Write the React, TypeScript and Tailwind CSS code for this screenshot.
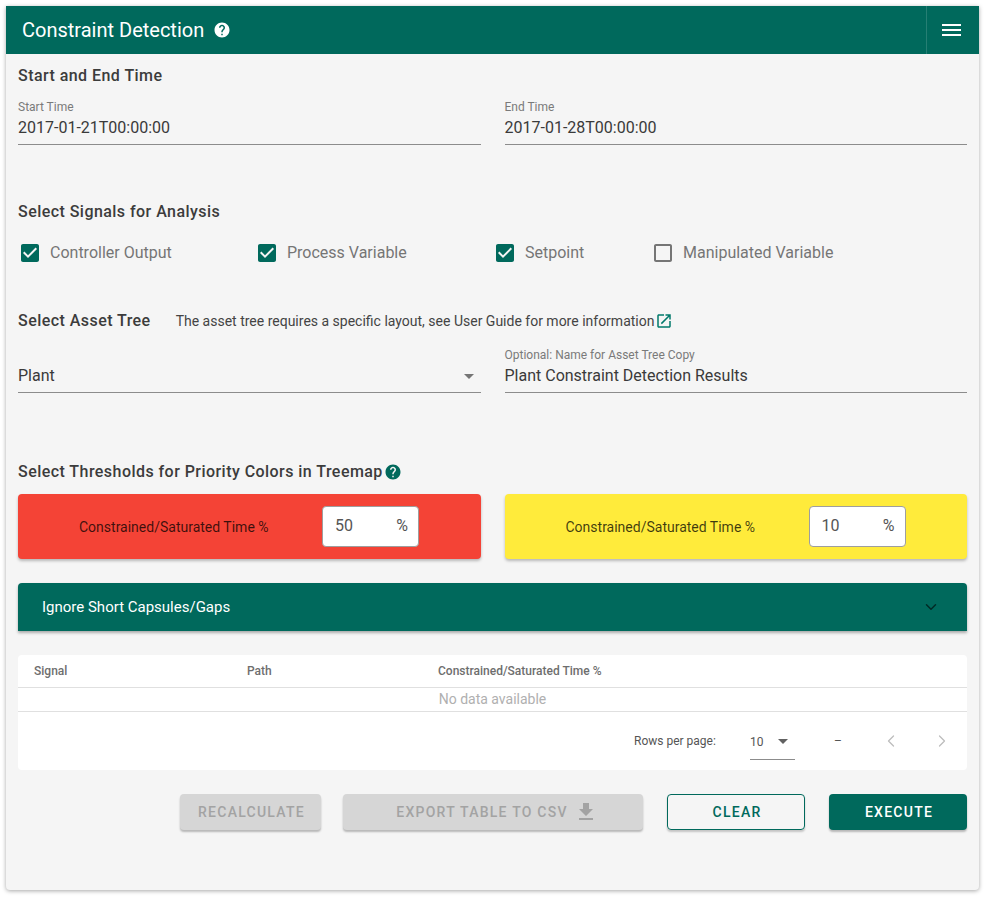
import { ChevronDown, ChevronLeft, ChevronRight } from 'lucide-react'

const ROBOTO = 'font-["Roboto",sans-serif]'

function HelpIcon({ className }: { className: string }) {
  return (
    <svg viewBox="0 0 24 24" className={className} fill="currentColor">
      <path d="M12 2C6.48 2 2 6.48 2 12s4.48 10 10 10 10-4.48 10-10S17.52 2 12 2zm1 17h-2v-2h2v2zm2.07-7.75l-.9.92C13.45 12.9 13 13.5 13 15h-2v-.5c0-1.1.45-2.1 1.17-2.83l1.24-1.26c.37-.36.59-.86.59-1.41 0-1.1-.9-2-2-2s-2 .9-2 2H8c0-2.21 1.79-4 4-4s4 1.79 4 4c0 .88-.36 1.68-.93 2.25z" />
    </svg>
  )
}

function Field({ label, value, arrow }: { label?: string; value: string; arrow?: boolean }) {
  return (
    <div className="flex-1 border-b border-[#8c8c8c] h-[49px] pt-[1px]">
      <div className="h-[20px] flex items-center text-xs text-[#7a7a7a]">{label}</div>
      <div className="h-[22px] flex items-center justify-between text-base text-[#3a3a3a]">
        <span>{value}</span>
        {arrow && <span className="mr-[7px] w-0 h-0 border-x-[5px] border-x-transparent border-t-[5px] border-t-[#757575]" />}
      </div>
    </div>
  )
}

function SignalCheck({ label, checked, className }: { label: string; checked?: boolean; className: string }) {
  return (
    <div className={`flex items-center ${className}`}>
      <svg viewBox="0 0 24 24" className={`w-[24px] h-[24px] ${checked ? 'text-[#00695c]' : 'text-[#757575]'}`} fill="currentColor">
        {checked ? (
          <path d="M19 3H5c-1.11 0-2 .9-2 2v14c0 1.1.89 2 2 2h14c1.1 0 2-.9 2-2V5c0-1.11-.89-2-2-2zm-9 14l-5-5 1.41-1.41L10 14.17l7.59-7.59L19 8l-9 9z" />
        ) : (
          <path d="M19 5v14H5V5h14m0-2H5c-1.1 0-2 .9-2 2v14c0 1.1.9 2 2 2h14c1.1 0 2-.9 2-2V5c0-1.1-.9-2-2-2z" />
        )}
      </svg>
      <span className="ml-[8px] text-base text-[#757575]">{label}</span>
    </div>
  )
}

function ThresholdCard({ value, className }: { value: string; className: string }) {
  return (
    <div className={`flex-1 h-[65px] rounded flex items-center shadow-[0_2px_3px_rgba(0,0,0,0.25)] ${className}`}>
      <span className="w-[304px] pl-[61px] pt-[1px] text-sm text-black/75">Constrained/Saturated Time %</span>
      <div className="w-[97px] h-[41px] -mt-[1px] bg-white rounded border border-[#9e9e9e] flex items-center justify-between pl-[12px] pr-[10px] text-[#555]">
        <span className="text-base">{value}</span>
        <span className="text-base">%</span>
      </div>
    </div>
  )
}

export default function App() {
  return (
    <div className={`min-h-[898px] bg-white p-[6px] pb-[8px] ${ROBOTO}`}>
      <div className="w-[973px] h-[884px] bg-[#f5f5f5] rounded-b shadow-[0_1px_4px_rgba(0,0,0,0.35)]">
        {/* Header */}
        <div className="h-[48px] bg-[#00695c] flex items-center text-white">
          <span className="ml-[16px] text-xl">Constraint Detection</span>
          <HelpIcon className="ml-[9px] w-[18px] h-[18px]" />
          <div className="ml-auto w-[53px] h-full pr-[3px] border-l border-white/15 flex flex-col items-center justify-center gap-[3px]">
            <span className="w-[19px] h-[2px] bg-white" />
            <span className="w-[19px] h-[2px] bg-white" />
            <span className="w-[19px] h-[2px] bg-white" />
          </div>
        </div>

        <div className="px-[12px]">
          <h2 className="h-[42px] pt-[2px] flex items-center text-base font-medium tracking-[0.45px] text-[#3c3c3c]">Start and End Time</h2>
          <div className="flex gap-[24px]">
            <Field label="Start Time" value="2017-01-21T00:00:00" />
            <Field label="End Time" value="2017-01-28T00:00:00" />
          </div>

          <h2 className="mt-[45px] h-[42px] pt-[2px] flex items-center text-base font-medium tracking-[0.45px] text-[#3c3c3c]">Select Signals for Analysis</h2>
          <div className="h-[42px] flex items-center">
            <SignalCheck label="Controller Output" checked className="w-[237px]" />
            <SignalCheck label="Process Variable" checked className="w-[238px]" />
            <SignalCheck label="Setpoint" checked className="w-[158px]" />
            <SignalCheck label="Manipulated Variable" className="w-[200px]" />
          </div>

          <div className="mt-[30px] h-[32px] pt-[2px] flex items-center">
            <h2 className="text-base font-medium tracking-[0.45px] text-[#3c3c3c]">Select Asset Tree</h2>
            <span className="ml-[25px] text-sm text-[#444]">The asset tree requires a specific layout, see User Guide for more information</span>
            <svg viewBox="0 0 24 24" className="ml-[1px] w-[18px] h-[18px] text-[#00796b]" fill="currentColor">
              <path d="M19 19H5V5h7V3H5c-1.11 0-2 .9-2 2v14c0 1.1.89 2 2 2h14c1.1 0 2-.9 2-2v-7h-2v7zM14 3v2h3.59l-9.83 9.83 1.41 1.41L19 6.41V10h2V3h-7z" />
            </svg>
          </div>
          <div className="mt-[8px] flex gap-[24px]">
            <Field value="Plant" arrow />
            <Field label="Optional: Name for Asset Tree Copy" value="Plant Constraint Detection Results" />
          </div>

          <div className="mt-[65px] h-[26px] pt-[2px] flex items-center">
            <h2 className="text-base font-medium tracking-[0.45px] text-[#3c3c3c]">Select Thresholds for Priority Colors in Treemap</h2>
            <HelpIcon className="ml-[1px] w-[18px] h-[18px] text-[#00695c]" />
          </div>
          <div className="mt-[10px] flex gap-[24px]">
            <ThresholdCard value="50" className="bg-[#f44336]" />
            <ThresholdCard value="10" className="bg-[#ffeb3b]" />
          </div>

          {/* Ignore short capsules */}
          <div className="mt-[24px] h-[48px] rounded-t bg-[#00695c] flex items-center justify-between pl-[24px] pr-[27px] shadow-[0_2px_3px_rgba(0,0,0,0.3)]">
            <span className="text-[15px] font-normal text-white">Ignore Short Capsules/Gaps</span>
            <ChevronDown className="w-[18px] h-[18px] text-black/60" strokeWidth={2} />
          </div>

          {/* Table */}
          <div className="mt-[24px] h-[115px] bg-white rounded">
            <div className="h-[33px] flex items-center border-b border-[#e0e0e0] text-xs font-medium text-[#6e6e6e]">
              <span className="ml-[16px] w-[213px]">Signal</span>
              <span className="w-[191px]">Path</span>
              <span>Constrained/Saturated Time %</span>
            </div>
            <div className="h-[24px] pb-[2px] flex items-center justify-center border-b border-[#e0e0e0] text-sm text-[#b0b0b0]">No data available</div>
            <div className="h-[58px] flex items-center text-xs text-[#555]">
              <span className="ml-[616px] w-[116px]">Rows per page:</span>
              <div className="w-[45px] h-[33px] mt-[5px] pb-[3px] border-b border-[#8c8c8c] flex items-center justify-between pr-[7px]">
                <span>10</span>
                <span className="w-0 h-0 border-x-[5px] border-x-transparent border-t-[5px] border-t-[#616161]" />
              </div>
              <span className="ml-[39px] w-[47px]">–</span>
              <ChevronLeft className="w-[20px] h-[20px] text-[#bdbdbd]" strokeWidth={1.5} />
              <ChevronRight className="ml-[31px] w-[20px] h-[20px] text-[#bdbdbd]" strokeWidth={1.5} />
            </div>
          </div>

          {/* Actions */}
          <div className="mt-[24px] h-[36px] flex items-stretch justify-end text-sm font-medium tracking-[1.25px]">
            <button className="w-[141px] pl-[2px] rounded bg-[#d6d6d6] text-[#a3a3a3] shadow-[0_2px_2px_rgba(0,0,0,0.25)]">RECALCULATE</button>
            <button className="ml-[22px] w-[300px] pl-[8px] rounded bg-[#d6d6d6] text-[#a3a3a3] flex items-center justify-center shadow-[0_2px_2px_rgba(0,0,0,0.25)]">
              EXPORT TABLE TO CSV
              <svg viewBox="0 0 24 24" className="ml-[6px] w-[24px] h-[24px]" fill="currentColor">
                <path d="M19 9h-4V3H9v6H5l7 7 7-7zM5 18v2h14v-2H5z" />
              </svg>
            </button>
            <button className="ml-[24px] w-[138px] pl-[2px] rounded border border-[#00695c] text-[#00695c] shadow-[0_2px_2px_rgba(0,0,0,0.2)]">CLEAR</button>
            <button className="ml-[24px] w-[138px] pl-[2px] rounded bg-[#00695c] text-white shadow-[0_2px_2px_rgba(0,0,0,0.25)]">EXECUTE</button>
          </div>
        </div>
      </div>
    </div>
  )
}
